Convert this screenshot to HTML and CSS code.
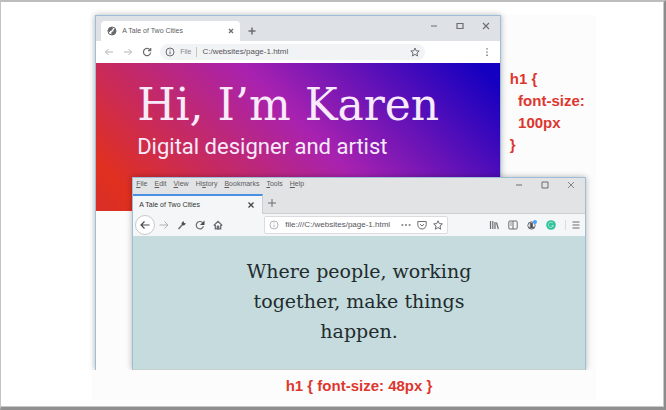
FILE: index.html
```html
<!DOCTYPE html>
<html lang="en">
<head>
<meta charset="utf-8">
<title>A Tale of Two Cities</title>
<link rel="stylesheet" href="styles.css">
</head>
<body>
<main class="frame">
  <div class="stage">
    <section class="window chrome">
      <div class="chrome-tabs">
        <div class="chrome-tab">
          <svg class="icon" viewBox="0 0 10 10"><circle cx="5" cy="5" r="4" fill="#fff" stroke="#5f6368"/><path d="M1 4 4 1.200 5.500 2 4.500 4.200 3 4.500 2.200 6Z M7.500 3 8.800 5 7.500 7.500 5 8.800 4.800 6.500 6.500 5.500Z" fill="#5f6368"/></svg>
          <span class="tab-title">A Tale of Two Cities</span>
          <button class="btn" aria-label="Close tab"><svg class="icon" viewBox="0 0 10 10"><path d="M3 3 7 7M7 3 3 7" stroke-width="1.300"/></svg></button>
        </div>
        <button class="btn new-tab" aria-label="New tab"><svg class="icon" viewBox="0 0 10 10"><path d="M5 1.500V8.500M1.500 5H8.500" stroke-width="1.500"/></svg></button>
        <div class="controls">
          <button class="btn" aria-label="Minimize"><svg class="icon" viewBox="0 0 10 10"><path d="M2 5H8"/></svg></button>
          <button class="btn" aria-label="Maximize"><svg class="icon" viewBox="0 0 10 10"><path d="M2 2.500H8V7.500H2Z" stroke-width="1.200"/></svg></button>
          <button class="btn" aria-label="Close"><svg class="icon" viewBox="0 0 10 10"><path d="M2 2 8 8M8 2 2 8" stroke-width="1.100"/></svg></button>
        </div>
      </div>
      <div class="chrome-bar">
        <button class="btn faint" aria-label="Back"><svg class="icon" viewBox="0 0 10 10"><path d="M9 5H1.500M4.500 2 1.500 5 4.500 8"/></svg></button>
        <button class="btn faint" aria-label="Forward"><svg class="icon" viewBox="0 0 10 10"><path d="M1 5H8.500M5.500 2 8.500 5 5.500 8"/></svg></button>
        <button class="btn" aria-label="Reload"><svg class="icon" viewBox="0 0 10 10"><path d="M8 3A3.600 3.600 0 1 0 8.600 5.500M8.700 1V3.700H6" stroke-width="1.200"/></svg></button>
        <div class="omnibox">
          <svg class="icon" viewBox="0 0 10 10"><circle cx="5" cy="5" r="4"/><path d="M5 4.500V7.300M5 2.500V3.500"/></svg>
          <label class="scheme" for="url-a">File</label>
          <input class="address" id="url-a" type="text" value="C:/websites/page-1.html">
          <button class="btn" aria-label="Bookmark"><svg class="icon" viewBox="0 0 10 10"><path d="M5 1 6.200 3.800 9.200 4 6.900 6 7.600 9 5 7.400 2.400 9 3.100 6 .8 4 3.800 3.800Z"/></svg></button>
        </div>
        <button class="btn kebab" aria-label="Menu"><svg class="icon" viewBox="0 0 10 10"><path d="M5 1.200V2.500M5 4.400V5.700M5 7.600V8.900" stroke-width="1.400"/></svg></button>
      </div>
      <header class="hero">
        <h1 class="hero-title">Hi, I’m Karen</h1>
        <p class="hero-sub">Digital designer and artist</p>
      </header>
    </section>

    <pre class="note note-side">h1 {
  font-size:
  100px
}</pre>

    <section class="window firefox">
      <div class="fox-top">
        <nav class="menu">
          <a href="#"><u>F</u>ile</a><a href="#"><u>E</u>dit</a><a href="#"><u>V</u>iew</a><a href="#">Hi<u>s</u>tory</a><a href="#"><u>B</u>ookmarks</a><a href="#"><u>T</u>ools</a><a href="#"><u>H</u>elp</a>
        </nav>
        <div class="controls">
          <button class="btn" aria-label="Minimize"><svg class="icon" viewBox="0 0 10 10"><path d="M2 5H8"/></svg></button>
          <button class="btn" aria-label="Maximize"><svg class="icon" viewBox="0 0 10 10"><path d="M2 2H8V8H2Z"/></svg></button>
          <button class="btn" aria-label="Close"><svg class="icon" viewBox="0 0 10 10"><path d="M2 2 8 8M8 2 2 8" stroke-width=".8"/></svg></button>
        </div>
      </div>
      <div class="fox-tabs">
        <div class="fox-tab">
          <span class="tab-title">A Tale of Two Cities</span>
          <button class="btn" aria-label="Close tab"><svg class="icon" viewBox="0 0 10 10"><path d="M2.500 2.500 7.500 7.500M7.500 2.500 2.500 7.500" stroke="#444" stroke-width="1.300"/></svg></button>
        </div>
        <button class="btn fox-new" aria-label="New tab"><svg class="icon" viewBox="0 0 10 10"><path d="M5 1V9M1 5H9"/></svg></button>
      </div>
      <div class="fox-bar">
        <div class="fox-nav">
          <button class="btn back" aria-label="Back"><svg class="icon" viewBox="0 0 10 10"><path d="M9.500 5H1M4.500 1.500 1 5 4.500 8.500" stroke="#4a4a4f" stroke-width="1.200"/></svg></button>
          <button class="btn faint" aria-label="Forward"><svg class="icon" viewBox="0 0 10 10"><path d="M.5 5H9M5.500 1.500 9 5 5.500 8.500"/></svg></button>
          <button class="btn" aria-label="Developer tools"><svg class="icon" viewBox="0 0 10 10"><path d="M1.500 9 5.500 4.500" stroke-width="1.500"/><path d="M4.500 3 6.500 1 7 3 9 3.500 7 5.500 5.200 5Z" fill="#4a4a4f" stroke="none"/></svg></button>
          <button class="btn" aria-label="Reload"><svg class="icon" viewBox="0 0 10 10"><path d="M7.500 2.500A3.700 3.700 0 1 0 8.500 6.300" stroke-width="1.200"/><path d="M9.500 .5V5H5Z" fill="#4a4a4f" stroke="none"/></svg></button>
          <button class="btn" aria-label="Home"><svg class="icon" viewBox="0 0 10 10"><path d="M.8 5.500 5 1.300 9.200 5.500M2.300 5V8.900H7.700V5" stroke-width="1.300"/><path d="M4.200 9V6H5.800V9Z" fill="#4a4a4f"/></svg></button>
        </div>
        <div class="urlbar">
          <svg class="icon dim" viewBox="0 0 10 10"><circle cx="5" cy="5" r="4"/><path d="M5 4.500V7.300M5 2.500V3.500"/></svg>
          <input class="address" type="text" aria-label="Address" value="file:///C:/websites/page-1.html">
          <button class="btn" aria-label="Page actions"><svg class="icon" viewBox="0 0 10 10"><path d="M.5 5H2.300M4.100 5H5.900M7.700 5H9.500" stroke-width="1.700"/></svg></button>
          <button class="btn" aria-label="Save to Pocket"><svg class="icon" viewBox="0 0 10 10"><path d="M.8 1.500H9.200V4.500C9.200 7 7.500 9 5 9S.8 7 .8 4.500ZM3 4.200 5 6 7 4.200"/></svg></button>
          <button class="btn" aria-label="Bookmark"><svg class="icon" viewBox="0 0 10 10"><path d="M5 .8 6.300 3.600 9.400 3.900 7 6 7.700 9.200 5 7.500 2.300 9.200 3 6 .6 3.900 3.700 3.600Z"/></svg></button>
        </div>
        <div class="fox-tools">
          <button class="btn" aria-label="Library"><svg class="icon" viewBox="0 0 10 10"><path d="M1.500 1V9M3.800 1V9M6 2V9M7.500 2.500 9.300 9" stroke-width="1.200"/></svg></button>
          <button class="btn" aria-label="Sidebar"><svg class="icon" viewBox="0 0 10 10"><rect x=".8" y="1" width="8.400" height="8" rx="1"/><path d="M5 1V9M2.300 3H3.700M2.300 5H3.700"/></svg></button>
          <button class="btn" aria-label="Account"><svg class="icon" viewBox="0 0 10 10"><circle cx="4.500" cy="5.500" r="3.700"/><path d="M3 3H5.500V6L7 8H2.500L3.500 6Z" fill="#4a4a4f"/><circle cx="8" cy="2" r="2" fill="#45a1ff" stroke="none"/></svg></button>
          <button class="btn" aria-label="Writing assistant"><svg class="icon" viewBox="0 0 10 10"><circle cx="5" cy="5" r="4.800" fill="#2fc39a" stroke="none"/><path d="M7 3.200A2.600 2.600 0 1 0 7.500 5.500H5.500" stroke="#a5e4d0"/></svg></button>
          <button class="btn hamburger" aria-label="Menu"><svg class="icon" viewBox="0 0 10 10"><path d="M1.500 2H8.500M1.500 5H8.500M1.500 8H8.500"/></svg></button>
        </div>
      </div>
      <div class="quote"><p class="quote-text">Where people, working together, make things happen.</p></div>
    </section>
    <pre class="note note-bottom">h1 { font-size: 48px }</pre>
  </div>
</main>
</body>
</html>
```

FILE: styles.css
```css
* { box-sizing: border-box; }

body {
  margin: 0;
  background: #fff;
  font-family: "Liberation Sans", Arial, sans-serif;
  color: #5c5c61;
}

.frame {
  min-height: 100vh;
  border: 1px solid #c4c4c4;
  border-top: 2px solid #bdbdbd;
  border-right: 2px solid #8c8c8c;
  border-bottom: 3px solid #909090;
  box-shadow: inset -1px -1px 0 #c8c8c8;
  padding-top: 13px;
}

/* Columns: margin, window offset, overlap, second window's overhang, margin */
.stage {
  display: grid;
  grid-template-columns: 94fr 37fr 368fr 85fr 78fr;
  grid-template-rows: 162px auto 30px;
  background: linear-gradient(#fcfcfc, #fcfcfc) 57% 0 / 76% 100% no-repeat;
}

.window {
  display: flex;
  flex-direction: column;
  border: 1px solid #9dbddb;
  border-bottom: 0;
  box-shadow: 0 0 6px rgba(0, 0, 0, .3);
  clip-path: inset(-8px -8px 0 -8px);
}

.chrome {
  grid-column: 2 / 4;
  grid-row: 1 / 3;
  background: #fcfcfc;
}

.firefox {
  grid-column: 3 / 5;
  grid-row: 2;
  background: #c5dbdd;
  border-bottom: 1px solid #c3cfcf;
}

.icon {
  display: block;
  flex: none;
  width: 10px;
  height: 10px;
  fill: none;
  stroke: #6c6c71;
}

.btn {
  display: flex;
  flex: none;
  padding: 0;
  border: 0;
  background: none;
}

.faint, .dim { opacity: .5; }

.controls {
  display: flex;
  gap: 16px;
  margin-left: auto;
  padding-right: 9px;
}

.tab-title {
  flex: 1;
  font-size: 7px;
  line-height: 10px;
  white-space: nowrap;
}

.address {
  flex: 1;
  min-width: 0;
  padding: 0;
  border: 0;
  outline: 0;
  background: none;
  color: #55555a;
  font-family: inherit;
  font-size: 8px;
  line-height: 12px;
}

.chrome-tabs {
  display: flex;
  height: 25px;
  padding: 5px 0 0 5px;
  background: #dee1e6;
}

.chrome-tab {
  display: flex;
  align-items: center;
  gap: 5px;
  width: 139px;
  padding: 0 4px 0 6px;
  border-radius: 4px 4px 0 0;
  background: #fff;
}

.new-tab { padding: 5px 7px; }

.chrome-bar {
  display: flex;
  align-items: center;
  gap: 9px;
  height: 22px;
  padding: 0 8px;
  background: #fff;
}

.omnibox {
  display: flex;
  flex: 1;
  align-items: center;
  gap: 5px;
  height: 16px;
  margin-left: -1px;
  padding: 0 5px;
  border-radius: 8px;
  background: #f1f3f4;
}

.scheme {
  padding-right: 5px;
  border-right: 1px solid #c4c7ca;
  color: #85888c;
  font-size: 7px;
  line-height: 10px;
}

.kebab { margin-left: 48px; }

.hero {
  height: 148px;
  padding: 13px 0 0 41px;
  background: linear-gradient(45deg, #d82e28 0%, #e0301f 9%, #a822b0 53%, #1400c0 96%);
  color: #f8eafa;
  white-space: nowrap;
}

.hero-title {
  margin: 0;
  font: 400 44px/57px "DejaVu Serif", serif;
}

.hero-sub {
  margin: 0;
  font: 400 22px/28px Roboto, sans-serif;
}

.fox-top {
  display: flex;
  align-items: flex-start;
  height: 16px;
  background: #e2e3e5;
}

.fox-top .controls { padding-top: 2px; }

.menu {
  display: flex;
  gap: 7px;
  padding-left: 3px;
  font-size: 7px;
  line-height: 11px;
}

.menu a {
  color: inherit;
  text-decoration: none;
}

.fox-tabs {
  display: flex;
  height: 20px;
  background: #e2e3e5;
}

.fox-tab {
  display: flex;
  align-items: center;
  width: 130px;
  padding: 0 6px;
  border-top: 2px solid #4a90e2;
  border-right: 1px solid #cdced0;
  background: #f5f6f7;
  color: #333;
}

.fox-new {
  flex: 1;
  padding: 4px;
  border-bottom: 1px solid #cdced0;
}

.fox-bar {
  display: flex;
  align-items: center;
  height: 22px;
  padding: 0 6px 0 2px;
  background: #f5f6f7;
}

.fox-nav, .fox-tools {
  display: flex;
  align-items: center;
  gap: 9px;
}

.fox-nav { gap: 8px; }

.back {
  margin-right: -4px;
  padding: 4px;
  border: 1px solid #c8c8ca;
  border-radius: 50%;
  background: #fff;
}

.urlbar {
  display: flex;
  flex: 1;
  align-items: center;
  gap: 6px;
  height: 18px;
  margin: 0 41px;
  padding: 0 4px;
  border: 1px solid #dcdcde;
  border-radius: 2px;
  background: #fff;
}

.hamburger {
  padding-left: 5px;
  border-left: 1px solid #dcdcde;
}

.quote {
  display: flex;
  justify-content: center;
  min-height: 133px;
  padding-top: 20px;
}

.quote-text {
  width: 240px;
  margin: 0;
  color: #222b2d;
  font: 400 19px/30px "DejaVu Serif", serif;
  text-align: center;
}

.note {
  margin: 0;
  color: #dc372f;
  font: 700 15px/22px "Liberation Sans", Arial, sans-serif;
}

.note-side {
  grid-column: 4 / 6;
  grid-row: 1;
  padding: 53px 0 0 9px;
}

.note-bottom {
  grid-column: 3 / 5;
  grid-row: 3;
  padding-top: 5px;
  text-align: center;
}
```
